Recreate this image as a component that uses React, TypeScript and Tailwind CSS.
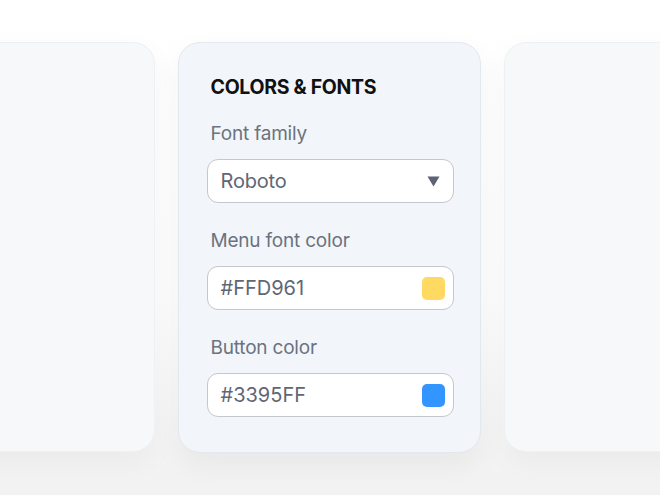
const font = { fontFamily: "Inter, 'Noto Sans', sans-serif" };

function ColorField({ value, swatch }: { value: string; swatch: string }) {
  return (
    <div className="flex h-[44px] items-center justify-between rounded-[11px] border border-[#c4c7cc] bg-white pl-[13px] pr-[8px]">
      <span className="text-[20px] leading-none text-[#5f6775]">{value}</span>
      <span className={`h-[23px] w-[23px] rounded-[5px] ${swatch}`} />
    </div>
  );
}

function SideCard() {
  return (
    <div className="h-[410px] w-[302px] shrink-0 rounded-[22px] border border-[#eef1f4] bg-[#f6f8fa] shadow-[0_10px_30px_rgba(0,0,0,0.04)]" />
  );
}

export default function App() {
  return (
    <div
      className="flex h-[495px] w-[660px] justify-center overflow-hidden bg-[linear-gradient(to_bottom,#ffffff_0%,#fdfdfd_60%,#f3f3f3_92%,#f2f2f2_100%)] pt-[42px]"
      style={font}
    >
      <div className="flex gap-[23px] pr-[2px]">
        <SideCard />
        <div className="h-[411px] w-[303px] shrink-0 rounded-[22px] border border-[#e3e8ed] bg-[#f2f6fa] pr-[26px] pl-[28px] pt-[32px] shadow-[0_12px_30px_rgba(0,0,0,0.05)]">
          <h2 className="pl-[4px] text-[19.5px] leading-[24px] font-bold tracking-[-0.3px] text-[#111111]">
            COLORS &amp; FONTS
          </h2>
          <div className="mt-[23px] pl-[4px] text-[19px] leading-[24px] tracking-[-0.2px] text-[#6b7280]">Font family</div>
          <div className="mt-[13px] flex h-[44px] items-center justify-between rounded-[11px] border border-[#c4c7cc] bg-white pl-[13px] pr-[13px]">
            <span className="text-[20px] leading-none tracking-[-0.2px] text-[#5f6775]">Roboto</span>
            <svg width="13" height="11" viewBox="0 0 13 11">
              <path d="M0.5 0.5 H12.5 L6.5 10.5 Z" fill="#5c6372" />
            </svg>
          </div>
          <div className="mt-[26px] pl-[4px] text-[19px] leading-[24px] tracking-[-0.2px] text-[#6b7280]">Menu font color</div>
          <div className="mt-[13px]">
            <ColorField value="#FFD961" swatch="bg-[#FFD961]" />
          </div>
          <div className="mt-[26px] pl-[4px] text-[19px] leading-[24px] tracking-[-0.2px] text-[#6b7280]">Button color</div>
          <div className="mt-[13px]">
            <ColorField value="#3395FF" swatch="bg-[#3395FF]" />
          </div>
        </div>
        <SideCard />
      </div>
    </div>
  );
}
